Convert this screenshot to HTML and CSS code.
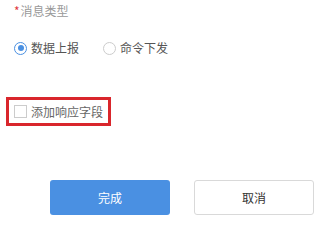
FILE: index.html
```html
<!DOCTYPE html>
<html lang="zh-CN">
<head>
<meta charset="utf-8">
<link rel="stylesheet" href="styles.css">
</head>
<body>
<div class="form">
  <div class="label"><span class="req">*</span>消息类型</div>
  <div class="radios">
    <label class="radio-item"><span class="radio checked"><span class="dot"></span></span><span>数据上报</span></label>
    <label class="radio-item second"><span class="radio"></span><span>命令下发</span></label>
  </div>
  <div class="check-row">
    <span class="checkbox"></span><span class="check-text">添加响应字段</span>
  </div>
  <div class="buttons">
    <div class="btn primary">完成</div>
    <div class="btn default">取消</div>
  </div>
</div>
</body>
</html>
```

FILE: styles.css
```css
html, body {
  margin: 0;
  padding: 0;
  background: #ffffff;
}
body {
  font-family: "Noto Sans CJK SC", "Noto Sans", sans-serif;
  font-size: 12px;
  color: #555555;
}
.form {
  padding: 0 0 0 14px;
}
.label {
  margin-top: 3px;
  height: 16px;
  line-height: 16px;
  color: #999999;
}
.req {
  color: #e0393e;
  margin-right: 1px;
}
.radios {
  margin-top: 19px;
  height: 20px;
  display: flex;
  align-items: center;
}
.radio-item {
  display: inline-flex;
  align-items: center;
  gap: 4px;
  line-height: 20px;
}
.radio-item.second {
  margin-left: 24px;
}
.radio {
  box-sizing: border-box;
  width: 13px;
  height: 13px;
  border: 1px solid #cccccc;
  border-radius: 50%;
  display: inline-flex;
  align-items: center;
  justify-content: center;
}
.radio.checked {
  border-color: #4a90e2;
}
.dot {
  width: 6px;
  height: 6px;
  border-radius: 50%;
  background: #4a90e2;
}
.check-row {
  margin-top: 39px;
  margin-left: -8px;
  box-sizing: border-box;
  width: 105px;
  height: 29px;
  border: 3px solid #d9262c;
  padding: 0 0 0 5px;
  display: flex;
  align-items: center;
  gap: 4px;
}
.checkbox {
  box-sizing: border-box;
  width: 13px;
  height: 13px;
  border: 1px solid #cccccc;
  background: #fff;
}
.check-text {
  color: #666666;
  line-height: 16px;
}
.buttons {
  margin-top: 54px;
  padding-left: 36px;
  display: flex;
  gap: 24px;
}
.btn {
  box-sizing: border-box;
  width: 120px;
  height: 35px;
  border-radius: 3px;
  display: flex;
  align-items: center;
  justify-content: center;
  font-size: 12px;
}
.primary {
  background: #4a90e2;
  color: #ffffff;
}
.default {
  background: #ffffff;
  border: 1px solid #d9d9d9;
  color: #333333;
}
```
